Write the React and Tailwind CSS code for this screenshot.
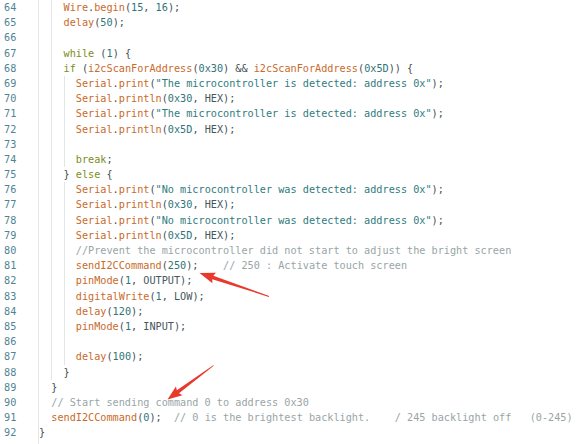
import React from "react";

const C = {
  f: "text-[#c96a2a]",
  s: "text-[#2f7b7e]",
  n: "text-[#2f7478]",
  c: "text-[#98a5a6]",
  k: "text-[#7e8c22]",
  K: "text-[#46585d]",
  p: "text-[#434f54]",
};

const lines = [
  [64, 2, [1], [["f", "Wire"], ["p", "."], ["f", "begin"], ["p", "("], ["n", "15"], ["p", ", "], ["n", "16"], ["p", ");"]]],
  [65, 2, [1], [["f", "delay"], ["p", "("], ["n", "50"], ["p", ");"]]],
  [66, 2, [1], []],
  [67, 2, [1], [["k", "while"], ["p", " ("], ["n", "1"], ["p", ") {"]]],
  [68, 2, [1], [["k", "if"], ["p", " ("], ["f", "i2cScanForAddress"], ["p", "("], ["n", "0x30"], ["p", ") && "], ["f", "i2cScanForAddress"], ["p", "("], ["n", "0x5D"], ["p", ")) {"]]],
  [69, 3, [1, 2], [["f", "Serial"], ["p", "."], ["f", "print"], ["p", "("], ["s", "\"The microcontroller is detected: address 0x\""], ["p", ");"]]],
  [70, 3, [1, 2], [["f", "Serial"], ["p", "."], ["f", "println"], ["p", "("], ["n", "0x30"], ["p", ", "], ["K", "HEX"], ["p", ");"]]],
  [71, 3, [1, 2], [["f", "Serial"], ["p", "."], ["f", "print"], ["p", "("], ["s", "\"The microcontroller is detected: address 0x\""], ["p", ");"]]],
  [72, 3, [1, 2], [["f", "Serial"], ["p", "."], ["f", "println"], ["p", "("], ["n", "0x5D"], ["p", ", "], ["K", "HEX"], ["p", ");"]]],
  [73, 3, [1, 2], []],
  [74, 3, [1, 2], [["k", "break"], ["p", ";"]]],
  [75, 2, [1], [["p", "} "], ["k", "else"], ["p", " {"]]],
  [76, 3, [1, 2], [["f", "Serial"], ["p", "."], ["f", "print"], ["p", "("], ["s", "\"No microcontroller was detected: address 0x\""], ["p", ");"]]],
  [77, 3, [1, 2], [["f", "Serial"], ["p", "."], ["f", "println"], ["p", "("], ["n", "0x30"], ["p", ", "], ["K", "HEX"], ["p", ");"]]],
  [78, 3, [1, 2], [["f", "Serial"], ["p", "."], ["f", "print"], ["p", "("], ["s", "\"No microcontroller was detected: address 0x\""], ["p", ");"]]],
  [79, 3, [1, 2], [["f", "Serial"], ["p", "."], ["f", "println"], ["p", "("], ["n", "0x5D"], ["p", ", "], ["K", "HEX"], ["p", ");"]]],
  [80, 3, [1, 2], [["c", "//Prevent the microcontroller did not start to adjust the bright screen"]]],
  [81, 3, [1, 2], [["f", "sendI2CCommand"], ["p", "("], ["n", "250"], ["p", ");    "], ["c", "// 250 : Activate touch screen"]]],
  [82, 3, [1, 2], [["f", "pinMode"], ["p", "("], ["n", "1"], ["p", ", "], ["K", "OUTPUT"], ["p", ");"]]],
  [83, 3, [1, 2], [["f", "digitalWrite"], ["p", "("], ["n", "1"], ["p", ", "], ["K", "LOW"], ["p", ");"]]],
  [84, 3, [1, 2], [["f", "delay"], ["p", "("], ["n", "120"], ["p", ");"]]],
  [85, 3, [1, 2], [["f", "pinMode"], ["p", "("], ["n", "1"], ["p", ", "], ["K", "INPUT"], ["p", ");"]]],
  [86, 3, [1, 2], []],
  [87, 3, [1, 2], [["f", "delay"], ["p", "("], ["n", "100"], ["p", ");"]]],
  [88, 2, [1], [["p", "}"]]],
  [89, 1, [], [["p", "}"]]],
  [90, 1, [], [["c", "// Start sending command 0 to address 0x30"]]],
  [91, 1, [], [["f", "sendI2CCommand"], ["p", "("], ["n", "0"], ["p", ");  "], ["c", "// 0 is the brightest backlight.    / 245 backlight off   (0-245)"]]],
  [92, 0, [], [["p", "}"]]],
];

function arrowPoints(tx, ty, hx, hy, headLen, headHalf, baseHalf, tailHalf) {
  const dx = hx - tx;
  const dy = hy - ty;
  const L = Math.hypot(dx, dy);
  const ux = dx / L;
  const uy = dy / L;
  const nx = -uy;
  const ny = ux;
  const bx = hx - ux * headLen;
  const by = hy - uy * headLen;
  const pts = [
    [tx + nx * tailHalf, ty + ny * tailHalf],
    [bx + nx * baseHalf, by + ny * baseHalf],
    [bx + nx * headHalf - ux * 1.5, by + ny * headHalf - uy * 1.5],
    [hx, hy],
    [bx - nx * headHalf - ux * 1.5, by - ny * headHalf - uy * 1.5],
    [bx - nx * baseHalf, by - ny * baseHalf],
    [tx - nx * tailHalf, ty - ny * tailHalf],
  ];
  return pts.map((p) => p[0].toFixed(2) + "," + p[1].toFixed(2)).join(" ");
}

export default function App() {
  return (
    <div
      className="relative w-[586px] h-[444px] overflow-hidden bg-white flex text-[10.2px]"
      style={{ fontFamily: '"DejaVu Sans Mono", monospace' }}
    >
      <div className="w-[39px] h-full border-r border-[#e4e6e7] flex flex-col text-[#4f8394] pl-[4px]">
        {lines.map((l) => (
          <div key={l[0]} className="h-[15.2px] leading-[15.2px]">
            {l[0]}
          </div>
        ))}
      </div>
      <div className="flex-1 flex flex-col">
        {lines.map((l) => {
          const [num, level, guides, toks] = l;
          const units = [];
          for (let i = 0; i < level; i++) {
            units.push(
              <span
                key={i}
                className={
                  "w-[2ch] h-full shrink-0 " +
                  (guides.includes(i) ? "border-l border-[#e2e4e5]" : "")
                }
              />
            );
          }
          return (
            <div key={num} className="h-[15.2px] leading-[15.2px] flex whitespace-pre">
              {units}
              <span>
                {toks.map((t, i) => (
                  <span key={i} className={C[t[0]]}>
                    {t[1]}
                  </span>
                ))}
              </span>
            </div>
          );
        })}
      </div>
      <svg className="absolute left-0 top-0 pointer-events-none" width="586" height="444">
        <polygon points={arrowPoints(269, 296.5, 199.5, 273, 14, 5.5, 1.8, 0.4)} fill="#e83a2c" />
        <polygon points={arrowPoints(213.5, 365.5, 167.5, 399.5, 13, 5.5, 1.8, 0.4)} fill="#e83a2c" />
      </svg>
    </div>
  );
}
